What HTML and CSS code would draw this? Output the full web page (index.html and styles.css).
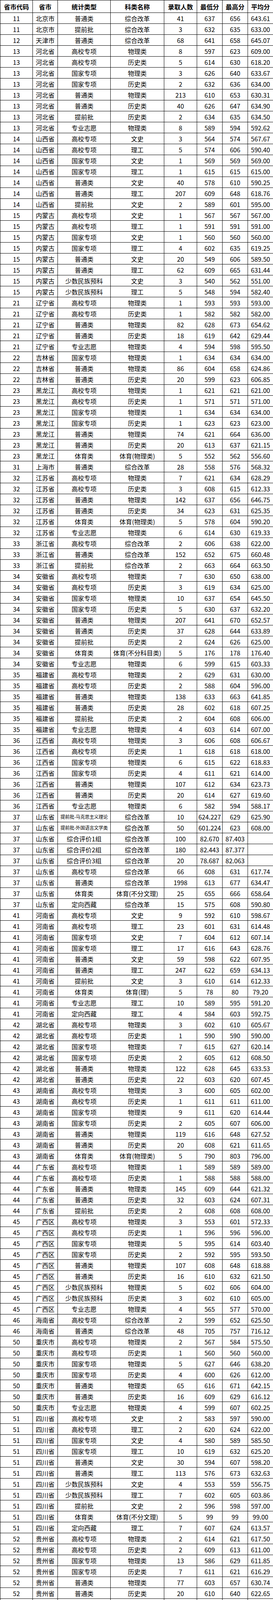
FILE: index.html
```html
<!DOCTYPE html>
<html lang="zh-CN">
<head>
<meta charset="utf-8">
<title>录取分数统计</title>
<link rel="stylesheet" href="styles.css">
</head>
<body>
<table class="scores">
<colgroup>
<col class="c-code"><col class="c-prov"><col class="c-type"><col class="c-subj"><col class="c-num"><col class="c-min"><col class="c-max"><col class="c-avg">
</colgroup>
<thead>
<tr><th>省市代码</th><th>省市</th><th>统计类型</th><th>科类名称</th><th>录取人数</th><th>最低分</th><th>最高分</th><th>平均分</th></tr>
</thead>
<tbody>
<tr><td>11</td><td>北京市</td><td>普通类</td><td>综合改革</td><td>41</td><td>637</td><td>656</td><td>643.61</td></tr>
<tr><td>11</td><td>北京市</td><td>提前批</td><td>综合改革</td><td>3</td><td>632</td><td>635</td><td>633.00</td></tr>
<tr><td>12</td><td>天津市</td><td>普通类</td><td>综合改革</td><td>68</td><td>641</td><td>658</td><td>645.07</td></tr>
<tr><td>13</td><td>河北省</td><td>高校专项</td><td>物理类</td><td>8</td><td>597</td><td>623</td><td>609.00</td></tr>
<tr><td>13</td><td>河北省</td><td>高校专项</td><td>历史类</td><td>5</td><td>614</td><td>630</td><td>618.20</td></tr>
<tr><td>13</td><td>河北省</td><td>国家专项</td><td>物理类</td><td>3</td><td>626</td><td>640</td><td>633.67</td></tr>
<tr><td>13</td><td>河北省</td><td>国家专项</td><td>历史类</td><td>2</td><td>632</td><td>636</td><td>634.00</td></tr>
<tr><td>13</td><td>河北省</td><td>普通类</td><td>物理类</td><td>213</td><td>610</td><td>653</td><td>630.31</td></tr>
<tr><td>13</td><td>河北省</td><td>普通类</td><td>历史类</td><td>40</td><td>626</td><td>647</td><td>634.90</td></tr>
<tr><td>13</td><td>河北省</td><td>提前批</td><td>历史类</td><td>2</td><td>634</td><td>635</td><td>634.50</td></tr>
<tr><td>13</td><td>河北省</td><td>专业志愿</td><td>物理类</td><td>8</td><td>589</td><td>594</td><td>592.62</td></tr>
<tr><td>14</td><td>山西省</td><td>高校专项</td><td>文史</td><td>3</td><td>564</td><td>574</td><td>567.67</td></tr>
<tr><td>14</td><td>山西省</td><td>高校专项</td><td>理工</td><td>5</td><td>574</td><td>606</td><td>590.40</td></tr>
<tr><td>14</td><td>山西省</td><td>国家专项</td><td>文史</td><td>1</td><td>569</td><td>569</td><td>569.00</td></tr>
<tr><td>14</td><td>山西省</td><td>国家专项</td><td>理工</td><td>1</td><td>615</td><td>615</td><td>615.00</td></tr>
<tr><td>14</td><td>山西省</td><td>普通类</td><td>文史</td><td>40</td><td>578</td><td>610</td><td>590.25</td></tr>
<tr><td>14</td><td>山西省</td><td>普通类</td><td>理工</td><td>207</td><td>609</td><td>648</td><td>618.76</td></tr>
<tr><td>14</td><td>山西省</td><td>提前批</td><td>文史</td><td>2</td><td>589</td><td>601</td><td>595.00</td></tr>
<tr><td>15</td><td>内蒙古</td><td>高校专项</td><td>文史</td><td>1</td><td>567</td><td>567</td><td>567.00</td></tr>
<tr><td>15</td><td>内蒙古</td><td>高校专项</td><td>理工</td><td>1</td><td>591</td><td>591</td><td>591.00</td></tr>
<tr><td>15</td><td>内蒙古</td><td>国家专项</td><td>文史</td><td>1</td><td>560</td><td>560</td><td>560.00</td></tr>
<tr><td>15</td><td>内蒙古</td><td>国家专项</td><td>理工</td><td>4</td><td>602</td><td>635</td><td>619.25</td></tr>
<tr><td>15</td><td>内蒙古</td><td>普通类</td><td>文史</td><td>20</td><td>549</td><td>606</td><td>589.50</td></tr>
<tr><td>15</td><td>内蒙古</td><td>普通类</td><td>理工</td><td>62</td><td>609</td><td>665</td><td>631.44</td></tr>
<tr><td>15</td><td>内蒙古</td><td>少数民族预科</td><td>文史</td><td>3</td><td>540</td><td>562</td><td>551.00</td></tr>
<tr><td>15</td><td>内蒙古</td><td>少数民族预科</td><td>理工</td><td>5</td><td>548</td><td>594</td><td>582.40</td></tr>
<tr><td>21</td><td>辽宁省</td><td>高校专项</td><td>物理类</td><td>1</td><td>593</td><td>593</td><td>593.00</td></tr>
<tr><td>21</td><td>辽宁省</td><td>高校专项</td><td>历史类</td><td>1</td><td>582</td><td>582</td><td>582.00</td></tr>
<tr><td>21</td><td>辽宁省</td><td>普通类</td><td>物理类</td><td>82</td><td>628</td><td>673</td><td>654.62</td></tr>
<tr><td>21</td><td>辽宁省</td><td>普通类</td><td>历史类</td><td>18</td><td>619</td><td>642</td><td>629.44</td></tr>
<tr><td>21</td><td>辽宁省</td><td>专业志愿</td><td>物理类</td><td>4</td><td>594</td><td>598</td><td>595.50</td></tr>
<tr><td>22</td><td>吉林省</td><td>国家专项</td><td>物理类</td><td>1</td><td>634</td><td>634</td><td>634.00</td></tr>
<tr><td>22</td><td>吉林省</td><td>普通类</td><td>物理类</td><td>86</td><td>604</td><td>658</td><td>624.86</td></tr>
<tr><td>22</td><td>吉林省</td><td>普通类</td><td>历史类</td><td>20</td><td>599</td><td>623</td><td>606.85</td></tr>
<tr><td>23</td><td>黑龙江</td><td>高校专项</td><td>物理类</td><td>1</td><td>621</td><td>621</td><td>621.00</td></tr>
<tr><td>23</td><td>黑龙江</td><td>高校专项</td><td>历史类</td><td>1</td><td>571</td><td>571</td><td>571.00</td></tr>
<tr><td>23</td><td>黑龙江</td><td>国家专项</td><td>物理类</td><td>1</td><td>634</td><td>634</td><td>634.00</td></tr>
<tr><td>23</td><td>黑龙江</td><td>国家专项</td><td>历史类</td><td>1</td><td>623</td><td>623</td><td>623.00</td></tr>
<tr><td>23</td><td>黑龙江</td><td>普通类</td><td>物理类</td><td>74</td><td>621</td><td>664</td><td>636.00</td></tr>
<tr><td>23</td><td>黑龙江</td><td>普通类</td><td>历史类</td><td>20</td><td>613</td><td>637</td><td>621.15</td></tr>
<tr><td>23</td><td>黑龙江</td><td>体育类</td><td>体育(物理类)</td><td>5</td><td>552</td><td>562</td><td>556.60</td></tr>
<tr><td>31</td><td>上海市</td><td>普通类</td><td>综合改革</td><td>28</td><td>558</td><td>576</td><td>568.32</td></tr>
<tr><td>32</td><td>江苏省</td><td>高校专项</td><td>物理类</td><td>7</td><td>621</td><td>634</td><td>628.29</td></tr>
<tr><td>32</td><td>江苏省</td><td>高校专项</td><td>历史类</td><td>3</td><td>608</td><td>615</td><td>612.33</td></tr>
<tr><td>32</td><td>江苏省</td><td>普通类</td><td>物理类</td><td>142</td><td>637</td><td>656</td><td>646.75</td></tr>
<tr><td>32</td><td>江苏省</td><td>普通类</td><td>历史类</td><td>34</td><td>623</td><td>631</td><td>625.35</td></tr>
<tr><td>32</td><td>江苏省</td><td>体育类</td><td>体育(物理类)</td><td>5</td><td>578</td><td>604</td><td>590.20</td></tr>
<tr><td>32</td><td>江苏省</td><td>专业志愿</td><td>物理类</td><td>6</td><td>614</td><td>630</td><td>619.33</td></tr>
<tr><td>33</td><td>浙江省</td><td>高校专项</td><td>综合改革</td><td>2</td><td>606</td><td>638</td><td>622.00</td></tr>
<tr><td>33</td><td>浙江省</td><td>普通类</td><td>综合改革</td><td>152</td><td>652</td><td>675</td><td>660.48</td></tr>
<tr><td>33</td><td>浙江省</td><td>提前批</td><td>综合改革</td><td>2</td><td>663</td><td>664</td><td>663.50</td></tr>
<tr><td>34</td><td>安徽省</td><td>高校专项</td><td>物理类</td><td>7</td><td>630</td><td>650</td><td>638.00</td></tr>
<tr><td>34</td><td>安徽省</td><td>高校专项</td><td>历史类</td><td>3</td><td>619</td><td>634</td><td>625.00</td></tr>
<tr><td>34</td><td>安徽省</td><td>国家专项</td><td>物理类</td><td>10</td><td>637</td><td>654</td><td>645.50</td></tr>
<tr><td>34</td><td>安徽省</td><td>国家专项</td><td>历史类</td><td>5</td><td>630</td><td>637</td><td>632.20</td></tr>
<tr><td>34</td><td>安徽省</td><td>普通类</td><td>物理类</td><td>207</td><td>641</td><td>670</td><td>652.57</td></tr>
<tr><td>34</td><td>安徽省</td><td>普通类</td><td>历史类</td><td>37</td><td>628</td><td>644</td><td>633.89</td></tr>
<tr><td>34</td><td>安徽省</td><td>提前批</td><td>历史类</td><td>2</td><td>624</td><td>626</td><td>625.00</td></tr>
<tr><td>34</td><td>安徽省</td><td>体育类</td><td>体育(不分科目类)</td><td>5</td><td>176</td><td>178</td><td>176.40</td></tr>
<tr><td>34</td><td>安徽省</td><td>专业志愿</td><td>物理类</td><td>6</td><td>599</td><td>615</td><td>603.33</td></tr>
<tr><td>35</td><td>福建省</td><td>高校专项</td><td>物理类</td><td>2</td><td>629</td><td>631</td><td>630.00</td></tr>
<tr><td>35</td><td>福建省</td><td>高校专项</td><td>历史类</td><td>2</td><td>588</td><td>604</td><td>596.00</td></tr>
<tr><td>35</td><td>福建省</td><td>普通类</td><td>物理类</td><td>138</td><td>633</td><td>663</td><td>641.85</td></tr>
<tr><td>35</td><td>福建省</td><td>普通类</td><td>历史类</td><td>28</td><td>602</td><td>618</td><td>607.25</td></tr>
<tr><td>35</td><td>福建省</td><td>提前批</td><td>历史类</td><td>2</td><td>604</td><td>608</td><td>606.00</td></tr>
<tr><td>35</td><td>福建省</td><td>专业志愿</td><td>物理类</td><td>4</td><td>603</td><td>614</td><td>607.00</td></tr>
<tr><td>36</td><td>江西省</td><td>高校专项</td><td>物理类</td><td>3</td><td>606</td><td>608</td><td>606.67</td></tr>
<tr><td>36</td><td>江西省</td><td>高校专项</td><td>历史类</td><td>1</td><td>618</td><td>618</td><td>618.00</td></tr>
<tr><td>36</td><td>江西省</td><td>国家专项</td><td>物理类</td><td>6</td><td>615</td><td>622</td><td>618.83</td></tr>
<tr><td>36</td><td>江西省</td><td>国家专项</td><td>历史类</td><td>4</td><td>611</td><td>621</td><td>614.00</td></tr>
<tr><td>36</td><td>江西省</td><td>普通类</td><td>物理类</td><td>107</td><td>612</td><td>634</td><td>623.73</td></tr>
<tr><td>36</td><td>江西省</td><td>普通类</td><td>历史类</td><td>20</td><td>614</td><td>627</td><td>619.60</td></tr>
<tr><td>36</td><td>江西省</td><td>专业志愿</td><td>物理类</td><td>6</td><td>582</td><td>594</td><td>588.17</td></tr>
<tr><td>37</td><td>山东省</td><td class="small">提前批-马克思主义理论</td><td>综合改革</td><td>10</td><td>624.227</td><td>629</td><td>625.90</td></tr>
<tr><td>37</td><td>山东省</td><td class="small">提前批-外国语言文学类</td><td>综合改革</td><td>50</td><td>601.224</td><td>623</td><td>608.00</td></tr>
<tr><td>37</td><td>山东省</td><td>综合评价1组</td><td>综合改革</td><td>100</td><td>82.670</td><td>87.403</td><td></td></tr>
<tr><td>37</td><td>山东省</td><td>综合评价2组</td><td>综合改革</td><td>180</td><td>82.443</td><td>87.377</td><td></td></tr>
<tr><td>37</td><td>山东省</td><td>综合评价3组</td><td>综合改革</td><td>20</td><td>78.687</td><td>82.063</td><td></td></tr>
<tr><td>37</td><td>山东省</td><td>高校专项</td><td>综合改革</td><td>66</td><td>608</td><td>631</td><td>617.74</td></tr>
<tr><td>37</td><td>山东省</td><td>普通类</td><td>综合改革</td><td>1998</td><td>613</td><td>677</td><td>634.47</td></tr>
<tr><td>37</td><td>山东省</td><td>体育类</td><td>体育(不分文理)</td><td>25</td><td>655</td><td>666</td><td>658.64</td></tr>
<tr><td>37</td><td>山东省</td><td>定向西藏</td><td>综合改革</td><td>15</td><td>575</td><td>608</td><td>590.80</td></tr>
<tr><td>41</td><td>河南省</td><td>高校专项</td><td>文史</td><td>9</td><td>592</td><td>610</td><td>598.67</td></tr>
<tr><td>41</td><td>河南省</td><td>高校专项</td><td>理工</td><td>23</td><td>601</td><td>631</td><td>614.48</td></tr>
<tr><td>41</td><td>河南省</td><td>国家专项</td><td>文史</td><td>7</td><td>604</td><td>612</td><td>607.14</td></tr>
<tr><td>41</td><td>河南省</td><td>国家专项</td><td>理工</td><td>17</td><td>616</td><td>643</td><td>628.76</td></tr>
<tr><td>41</td><td>河南省</td><td>普通类</td><td>文史</td><td>59</td><td>598</td><td>622</td><td>607.95</td></tr>
<tr><td>41</td><td>河南省</td><td>普通类</td><td>理工</td><td>247</td><td>622</td><td>659</td><td>634.13</td></tr>
<tr><td>41</td><td>河南省</td><td>提前批</td><td>文史</td><td>3</td><td>610</td><td>614</td><td>612.33</td></tr>
<tr><td>41</td><td>河南省</td><td>体育类</td><td>体育(理)</td><td>5</td><td>78</td><td>80</td><td>79.20</td></tr>
<tr><td>41</td><td>河南省</td><td>专业志愿</td><td>理工</td><td>10</td><td>589</td><td>595</td><td>591.20</td></tr>
<tr><td>41</td><td>河南省</td><td>定向西藏</td><td>理工</td><td>4</td><td>584</td><td>603</td><td>592.75</td></tr>
<tr><td>42</td><td>湖北省</td><td>高校专项</td><td>物理类</td><td>3</td><td>602</td><td>610</td><td>605.67</td></tr>
<tr><td>42</td><td>湖北省</td><td>高校专项</td><td>历史类</td><td>1</td><td>590</td><td>590</td><td>590.00</td></tr>
<tr><td>42</td><td>湖北省</td><td>国家专项</td><td>物理类</td><td>7</td><td>615</td><td>627</td><td>620.14</td></tr>
<tr><td>42</td><td>湖北省</td><td>国家专项</td><td>历史类</td><td>2</td><td>605</td><td>612</td><td>608.50</td></tr>
<tr><td>42</td><td>湖北省</td><td>普通类</td><td>物理类</td><td>122</td><td>628</td><td>645</td><td>633.53</td></tr>
<tr><td>42</td><td>湖北省</td><td>普通类</td><td>历史类</td><td>22</td><td>603</td><td>620</td><td>607.45</td></tr>
<tr><td>43</td><td>湖南省</td><td>高校专项</td><td>物理类</td><td>3</td><td>600</td><td>605</td><td>602.00</td></tr>
<tr><td>43</td><td>湖南省</td><td>高校专项</td><td>历史类</td><td>1</td><td>611</td><td>611</td><td>611.00</td></tr>
<tr><td>43</td><td>湖南省</td><td>国家专项</td><td>物理类</td><td>9</td><td>611</td><td>620</td><td>614.44</td></tr>
<tr><td>43</td><td>湖南省</td><td>国家专项</td><td>历史类</td><td>2</td><td>605</td><td>607</td><td>606.00</td></tr>
<tr><td>43</td><td>湖南省</td><td>普通类</td><td>物理类</td><td>119</td><td>616</td><td>648</td><td>627.52</td></tr>
<tr><td>43</td><td>湖南省</td><td>普通类</td><td>历史类</td><td>20</td><td>608</td><td>621</td><td>611.65</td></tr>
<tr><td>43</td><td>湖南省</td><td>体育类</td><td>体育(物理类)</td><td>5</td><td>790</td><td>803</td><td>796.00</td></tr>
<tr><td>44</td><td>广东省</td><td>高校专项</td><td>物理类</td><td>1</td><td>589</td><td>589</td><td>589.00</td></tr>
<tr><td>44</td><td>广东省</td><td>高校专项</td><td>历史类</td><td>1</td><td>588</td><td>588</td><td>588.00</td></tr>
<tr><td>44</td><td>广东省</td><td>普通类</td><td>物理类</td><td>145</td><td>609</td><td>644</td><td>621.32</td></tr>
<tr><td>44</td><td>广东省</td><td>普通类</td><td>历史类</td><td>32</td><td>603</td><td>624</td><td>607.31</td></tr>
<tr><td>44</td><td>广东省</td><td>提前批</td><td>历史类</td><td>2</td><td>608</td><td>608</td><td>608.00</td></tr>
<tr><td>45</td><td>广西区</td><td>高校专项</td><td>物理类</td><td>3</td><td>553</td><td>601</td><td>572.33</td></tr>
<tr><td>45</td><td>广西区</td><td>高校专项</td><td>历史类</td><td>1</td><td>596</td><td>596</td><td>596.00</td></tr>
<tr><td>45</td><td>广西区</td><td>国家专项</td><td>物理类</td><td>5</td><td>595</td><td>614</td><td>603.40</td></tr>
<tr><td>45</td><td>广西区</td><td>国家专项</td><td>历史类</td><td>2</td><td>592</td><td>595</td><td>593.50</td></tr>
<tr><td>45</td><td>广西区</td><td>普通类</td><td>物理类</td><td>107</td><td>608</td><td>648</td><td>618.88</td></tr>
<tr><td>45</td><td>广西区</td><td>普通类</td><td>历史类</td><td>16</td><td>610</td><td>632</td><td>621.50</td></tr>
<tr><td>45</td><td>广西区</td><td>少数民族预科</td><td>物理类</td><td>5</td><td>602</td><td>606</td><td>604.00</td></tr>
<tr><td>45</td><td>广西区</td><td>少数民族预科</td><td>历史类</td><td>3</td><td>602</td><td>610</td><td>605.00</td></tr>
<tr><td>45</td><td>广西区</td><td>专业志愿</td><td>物理类</td><td>4</td><td>565</td><td>577</td><td>570.00</td></tr>
<tr><td>46</td><td>海南省</td><td>高校专项</td><td>综合改革</td><td>2</td><td>599</td><td>652</td><td>625.50</td></tr>
<tr><td>46</td><td>海南省</td><td>普通类</td><td>综合改革</td><td>48</td><td>705</td><td>757</td><td>716.12</td></tr>
<tr><td>50</td><td>重庆市</td><td>高校专项</td><td>物理类</td><td>2</td><td>567</td><td>584</td><td>575.50</td></tr>
<tr><td>50</td><td>重庆市</td><td>高校专项</td><td>历史类</td><td>1</td><td>560</td><td>560</td><td>560.00</td></tr>
<tr><td>50</td><td>重庆市</td><td>国家专项</td><td>物理类</td><td>5</td><td>627</td><td>646</td><td>638.20</td></tr>
<tr><td>50</td><td>重庆市</td><td>国家专项</td><td>历史类</td><td>4</td><td>600</td><td>626</td><td>612.00</td></tr>
<tr><td>50</td><td>重庆市</td><td>普通类</td><td>物理类</td><td>65</td><td>616</td><td>671</td><td>642.15</td></tr>
<tr><td>50</td><td>重庆市</td><td>普通类</td><td>历史类</td><td>16</td><td>609</td><td>629</td><td>616.12</td></tr>
<tr><td>50</td><td>重庆市</td><td>专业志愿</td><td>物理类</td><td>4</td><td>599</td><td>607</td><td>602.25</td></tr>
<tr><td>51</td><td>四川省</td><td>高校专项</td><td>文史</td><td>2</td><td>583</td><td>597</td><td>590.00</td></tr>
<tr><td>51</td><td>四川省</td><td>高校专项</td><td>理工</td><td>2</td><td>620</td><td>624</td><td>622.00</td></tr>
<tr><td>51</td><td>四川省</td><td>国家专项</td><td>文史</td><td>4</td><td>580</td><td>589</td><td>585.50</td></tr>
<tr><td>51</td><td>四川省</td><td>国家专项</td><td>理工</td><td>10</td><td>619</td><td>632</td><td>625.20</td></tr>
<tr><td>51</td><td>四川省</td><td>普通类</td><td>文史</td><td>30</td><td>594</td><td>607</td><td>598.20</td></tr>
<tr><td>51</td><td>四川省</td><td>普通类</td><td>理工</td><td>113</td><td>576</td><td>673</td><td>632.63</td></tr>
<tr><td>51</td><td>四川省</td><td>少数民族预科</td><td>文史</td><td>4</td><td>553</td><td>559</td><td>556.75</td></tr>
<tr><td>51</td><td>四川省</td><td>少数民族预科</td><td>理工</td><td>7</td><td>602</td><td>605</td><td>603.86</td></tr>
<tr><td>51</td><td>四川省</td><td>提前批</td><td>文史</td><td>2</td><td>596</td><td>598</td><td>597.00</td></tr>
<tr><td>51</td><td>四川省</td><td>体育类</td><td>体育(不分文理)</td><td>5</td><td>99</td><td>99</td><td>99.00</td></tr>
<tr><td>51</td><td>四川省</td><td>定向西藏</td><td>理工</td><td>7</td><td>607</td><td>624</td><td>613.57</td></tr>
<tr><td>52</td><td>贵州省</td><td>高校专项</td><td>物理类</td><td>2</td><td>614</td><td>621</td><td>617.50</td></tr>
<tr><td>52</td><td>贵州省</td><td>高校专项</td><td>历史类</td><td>2</td><td>609</td><td>613</td><td>611.00</td></tr>
<tr><td>52</td><td>贵州省</td><td>国家专项</td><td>物理类</td><td>13</td><td>586</td><td>629</td><td>611.85</td></tr>
<tr><td>52</td><td>贵州省</td><td>国家专项</td><td>历史类</td><td>7</td><td>611</td><td>621</td><td>616.29</td></tr>
<tr><td>52</td><td>贵州省</td><td>普通类</td><td>物理类</td><td>77</td><td>603</td><td>657</td><td>630.74</td></tr>
<tr><td>52</td><td>贵州省</td><td>普通类</td><td>历史类</td><td>20</td><td>610</td><td>640</td><td>622.65</td></tr>
<tr><td>52</td><td>贵州省</td><td>少数民族预科</td><td>物理类</td><td>6</td><td>611</td><td>628</td><td>617.17</td></tr>
<tr><td>52</td><td>贵州省</td><td>少数民族预科</td><td>历史类</td><td>2</td><td>611</td><td>612</td><td>611.50</td></tr>
<tr><td>52</td><td>贵州省</td><td>专业志愿</td><td>物理类</td><td>4</td><td>602</td><td>609</td><td>603.75</td></tr>
<tr><td>53</td><td>云南省</td><td>高校专项</td><td>文史</td><td>2</td><td>606</td><td>611</td><td>608.50</td></tr>
<tr><td>53</td><td>云南省</td><td>高校专项</td><td>理工</td><td>2</td><td>555</td><td>584</td><td>569.50</td></tr>
<tr><td>53</td><td>云南省</td><td>国家专项</td><td>文史</td><td>3</td><td>630</td><td>636</td><td>633.67</td></tr>
<tr><td>53</td><td>云南省</td><td>国家专项</td><td>理工</td><td>12</td><td>568</td><td>621</td><td>601.25</td></tr>
<tr><td>53</td><td>云南省</td><td>普通类</td><td>文史</td><td>20</td><td>631</td><td>646</td><td>636.70</td></tr>
<tr><td>53</td><td>云南省</td><td>普通类</td><td>理工</td><td>80</td><td>610</td><td>649</td><td>624.76</td></tr>
<tr><td>53</td><td>云南省</td><td>少数民族预科</td><td>文史</td><td>4</td><td>600</td><td>614</td><td>606.50</td></tr>
<tr><td>53</td><td>云南省</td><td>少数民族预科</td><td>理工</td><td>7</td><td>597</td><td>605</td><td>599.29</td></tr>
<tr><td>54</td><td>西藏区</td><td>高校专项</td><td>文史</td><td>1</td><td>358</td><td>358</td><td>358.00</td></tr>
<tr><td>54</td><td>西藏区</td><td>高校专项</td><td>理工</td><td>1</td><td>393</td><td>393</td><td>393.00</td></tr>
<tr><td>54</td><td>西藏区</td><td>国家专项</td><td>文史</td><td>1</td><td>437</td><td>437</td><td>437.00</td></tr>
<tr><td>54</td><td>西藏区</td><td>国家专项</td><td>理工</td><td>4</td><td>394</td><td>600</td><td>544.00</td></tr>
<tr><td>54</td><td>西藏区</td><td>普通类</td><td>文史</td><td>4</td><td>410</td><td>567</td><td>489.25</td></tr>
<tr><td>54</td><td>西藏区</td><td>普通类</td><td>理工</td><td>8</td><td>609</td><td>630</td><td>621.50</td></tr>
<tr><td>54</td><td>西藏区</td><td>少数民族预科</td><td>文史</td><td>2</td><td>336</td><td>339</td><td>337.50</td></tr>
<tr><td>54</td><td>西藏区</td><td>少数民族预科</td><td>理工</td><td>2</td><td>392</td><td>393</td><td>392.50</td></tr>
<tr><td>54</td><td>西藏区</td><td>西藏内地班</td><td>文史</td><td>22</td><td>434</td><td>516</td><td>478.50</td></tr>
<tr><td>54</td><td>西藏区</td><td>西藏内地班</td><td>理工</td><td>14</td><td>452</td><td>580</td><td>497.86</td></tr>
<tr><td>61</td><td>陕西省</td><td>高校专项</td><td>文史</td><td>2</td><td>570</td><td>574</td><td>572.00</td></tr>
<tr><td>61</td><td>陕西省</td><td>高校专项</td><td>理工</td><td>3</td><td>596</td><td>608</td><td>600.00</td></tr>
<tr><td>61</td><td>陕西省</td><td>国家专项</td><td>文史</td><td>4</td><td>588</td><td>590</td><td>589.00</td></tr>
<tr><td>61</td><td>陕西省</td><td>国家专项</td><td>理工</td><td>9</td><td>555</td><td>599</td><td>581.67</td></tr>
<tr><td>61</td><td>陕西省</td><td>普通类</td><td>文史</td><td>21</td><td>584</td><td>603</td><td>592.48</td></tr>
<tr><td>61</td><td>陕西省</td><td>普通类</td><td>理工</td><td>95</td><td>612</td><td>643</td><td>620.12</td></tr>
<tr><td>62</td><td>甘肃省</td><td>高校专项</td><td>物理类</td><td>3</td><td>569</td><td>596</td><td>580.67</td></tr>
<tr><td>62</td><td>甘肃省</td><td>高校专项</td><td>历史类</td><td>1</td><td>608</td><td>608</td><td>608.00</td></tr>
<tr><td>62</td><td>甘肃省</td><td>国家专项</td><td>物理类</td><td>14</td><td>590</td><td>627</td><td>600.50</td></tr>
<tr><td>62</td><td>甘肃省</td><td>国家专项</td><td>历史类</td><td>7</td><td>589</td><td>616</td><td>603.86</td></tr>
<tr><td>62</td><td>甘肃省</td><td>普通类</td><td>物理类</td><td>107</td><td>608</td><td>646</td><td>624.86</td></tr>
<tr><td>62</td><td>甘肃省</td><td>普通类</td><td>历史类</td><td>24</td><td>612</td><td>627</td><td>617.46</td></tr>
<tr><td>62</td><td>甘肃省</td><td>少数民族预科</td><td>物理类</td><td>6</td><td>595</td><td>601</td><td>598.17</td></tr>
<tr><td>62</td><td>甘肃省</td><td>少数民族预科</td><td>历史类</td><td>4</td><td>598</td><td>607</td><td>600.50</td></tr>
<tr><td>62</td><td>甘肃省</td><td>专业志愿</td><td>物理类</td><td>4</td><td>563</td><td>575</td><td>567.00</td></tr>
<tr><td>63</td><td>青海省</td><td>高校专项</td><td>文史</td><td>1</td><td>516</td><td>516</td><td>516.00</td></tr>
<tr><td>63</td><td>青海省</td><td>高校专项</td><td>理工</td><td>3</td><td>490</td><td>508</td><td>502.00</td></tr>
<tr><td>63</td><td>青海省</td><td>国家专项</td><td>文史</td><td>1</td><td>529</td><td>529</td><td>529.00</td></tr>
<tr><td>63</td><td>青海省</td><td>国家专项</td><td>理工</td><td>1</td><td>417</td><td>417</td><td>417.00</td></tr>
<tr><td>63</td><td>青海省</td><td>普通类</td><td>文史</td><td>18</td><td>523</td><td>566</td><td>532.22</td></tr>
<tr><td>63</td><td>青海省</td><td>普通类</td><td>理工</td><td>48</td><td>522</td><td>589</td><td>542.73</td></tr>
<tr><td>63</td><td>青海省</td><td>少数民族预科</td><td>文史</td><td>2</td><td>517</td><td>519</td><td>518.00</td></tr>
<tr><td>63</td><td>青海省</td><td>少数民族预科</td><td>理工</td><td>6</td><td>479</td><td>490</td><td>485.17</td></tr>
<tr><td>64</td><td>宁夏区</td><td>高校专项</td><td>文史</td><td>1</td><td>566</td><td>566</td><td>566.00</td></tr>
<tr><td>64</td><td>宁夏区</td><td>高校专项</td><td>理工</td><td>1</td><td>491</td><td>491</td><td>491.00</td></tr>
<tr><td>64</td><td>宁夏区</td><td>国家专项</td><td>文史</td><td>1</td><td>578</td><td>578</td><td>578.00</td></tr>
<tr><td>64</td><td>宁夏区</td><td>国家专项</td><td>理工</td><td>2</td><td>488</td><td>508</td><td>498.00</td></tr>
<tr><td>64</td><td>宁夏区</td><td>普通类</td><td>文史</td><td>18</td><td>559</td><td>603</td><td>582.78</td></tr>
<tr><td>64</td><td>宁夏区</td><td>普通类</td><td>理工</td><td>52</td><td>559</td><td>600</td><td>570.98</td></tr>
<tr><td>64</td><td>宁夏区</td><td>少数民族预科</td><td>文史</td><td>2</td><td>511</td><td>523</td><td>517.00</td></tr>
<tr><td>64</td><td>宁夏区</td><td>少数民族预科</td><td>理工</td><td>6</td><td>506</td><td>549</td><td>522.17</td></tr>
<tr><td>65</td><td>新疆区</td><td>高校专项</td><td>文史</td><td>1</td><td>503</td><td>503</td><td>503.00</td></tr>
<tr><td>65</td><td>新疆区</td><td>高校专项</td><td>理工</td><td>1</td><td>539</td><td>539</td><td>539.00</td></tr>
<tr><td>65</td><td>新疆区</td><td>国家专项</td><td>文史</td><td>1</td><td>553</td><td>553</td><td>553.00</td></tr>
<tr><td>65</td><td>新疆区</td><td>国家专项</td><td>理工</td><td>6</td><td>531</td><td>567</td><td>547.17</td></tr>
<tr><td>65</td><td>新疆区</td><td>普通类</td><td>文史</td><td>18</td><td>537</td><td>564</td><td>546.67</td></tr>
<tr><td>65</td><td>新疆区</td><td>普通类</td><td>理工</td><td>55</td><td>526</td><td>586</td><td>562.16</td></tr>
<tr><td>65</td><td>新疆区</td><td>协作计划</td><td>文史</td><td>20</td><td>466</td><td>488</td><td>474.90</td></tr>
<tr><td>65</td><td>新疆区</td><td>协作计划</td><td>理工</td><td>40</td><td>453</td><td>508</td><td>463.45</td></tr>
<tr><td>65</td><td>新疆区</td><td>新疆内地班</td><td>文史</td><td>9</td><td>545</td><td>571</td><td>554.44</td></tr>
<tr><td>65</td><td>新疆区</td><td>新疆内地班</td><td>理工</td><td>22</td><td>563</td><td>614</td><td>580.00</td></tr>
<tr><td>99</td><td>港澳台</td><td>理工</td><td>联招</td><td>26</td><td>574</td><td>588</td><td>580.54</td></tr>
<tr><td>99</td><td>港澳台</td><td>文史</td><td>联招</td><td>24</td><td>519</td><td>553</td><td>527.21</td></tr>
</tbody>
</table>
</body>
</html>
```

FILE: styles.css
```css
html, body {
  margin: 0;
  padding: 0;
  background: #ffffff;
}

body {
  font-family: "Noto Sans CJK SC", "Liberation Sans", sans-serif;
  color: #000000;
}

.scores {
  border-collapse: collapse;
  table-layout: fixed;
  width: 698px;
  font-size: 16px;
}

.c-code { width: 83px; }
.c-prov { width: 64px; }
.c-type { width: 135px; }
.c-subj { width: 137px; }
.c-num  { width: 84px; }
.c-min  { width: 65px; }
.c-max  { width: 65px; }
.c-avg  { width: 65px; }

.scores th,
.scores td {
  border: 1px solid #000000;
  padding: 0;
  text-align: center;
  vertical-align: middle;
  white-space: nowrap;
  overflow: hidden;
  line-height: 1;
}

.scores thead tr {
  height: 32px;
}

.scores th {
  font-weight: bold;
}

.scores tbody tr {
  height: 28px;
}

.scores td.small {
  font-size: 12px;
  letter-spacing: -0.3px;
}
```
